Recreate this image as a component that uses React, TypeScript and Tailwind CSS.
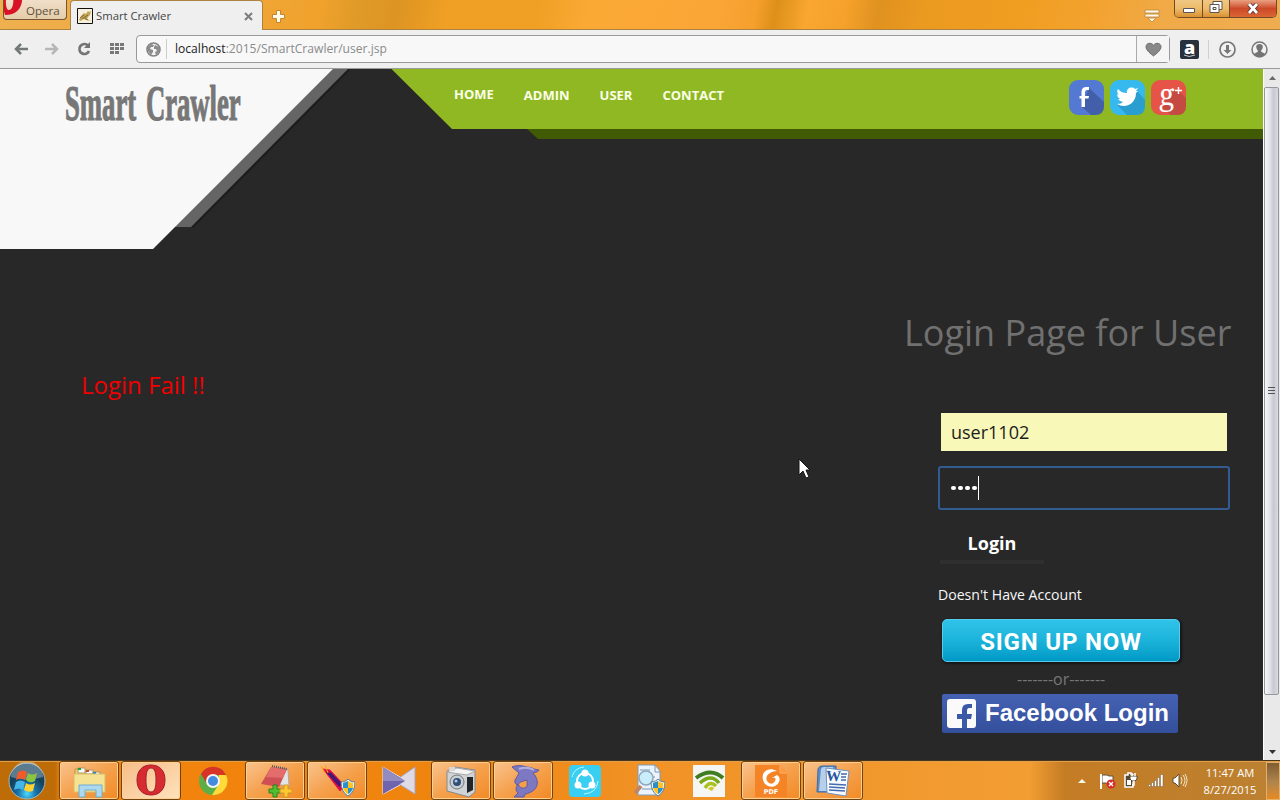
import type { ReactNode } from "react";

const ui = "font-['Open_Sans','Noto_Sans',sans-serif]";

function TitleBar() {
  return (
    <div className="relative flex h-[30px] shrink-0 items-start border-b border-[#ad8340] bg-[linear-gradient(100deg,#efb04f_0%,#efa535_20%,#f0a22c_25%,#e09a28_28%,#dd9422_31%,#f0a024_35%,#f0a024_42%,#fba935_46%,#faa637_56%,#f59f2c_59%,#dd9019_60.5%,#f9a731_63%,#f5a12b_66%,#df921f_68.5%,#eb9a20_72%,#f09e22_80%,#f3a22e_85%,#f0aa48_91%,#efac50_100%)] pl-[3px]">
      <div className="relative flex h-5 w-16 items-center overflow-hidden rounded-b-[4px] border border-t-0 border-[#765533] bg-linear-to-b from-[#f1dfca] to-[#e5cca9] pl-[22px] pt-[2px] text-[11.600px] leading-[17px] text-[#5c5140]">
        <svg className="absolute -left-1 -top-[6px]" width="24" height="22" viewBox="0 0 24 22">
          <path fillRule="evenodd" d="M10 -4C19-4 23 1 22 7C21 15 16 21 5 21L-2-4ZM9-1C5 1 5 14 8 16C13 17 14 8 13 2Z" fill="#d81325" />
        </svg>
        Opera
      </div>
      <div className="relative ml-[3px] flex h-[30px] w-[193px] items-center rounded-t-[4px] border border-b-0 border-[#ad8340] bg-[#efefef] pl-[6px] pt-px text-[11.300px] text-[#444]">
        <svg className="mr-[3px] shrink-0" width="16" height="16" viewBox="0 0 16 16">
          <path d="M.5.5h15v15H.5z" fill="#f6f1df" stroke="#111" />
          <path d="M2 12l2-4 3-3 2 1 2-3 1 1 2-1-1 4-2 2-1 2 4 2-5-1-3-1-2 2z" fill="#c3a252" />
          <path d="M3 10l4-3m-2 4 6-4m-3 3 3 2" stroke="#6e5c37" strokeWidth=".8" fill="none" />
        </svg>
        <span className="whitespace-nowrap">Smart Crawler</span>
        <svg className="ml-auto mr-[9px]" width="9" height="9" viewBox="0 0 9 9"><path d="M1 1l7 7M8 1L1 8" stroke="#7c7c7c" strokeWidth="2" /></svg>
      </div>
      <svg className="ml-[9px] mt-[10px]" width="13" height="13" viewBox="0 0 13 13"><path d="M4.5.5h4v4h4v4h-4v4h-4v-4h-4v-4h4z" fill="#fff9e9" stroke="#c4852e" /></svg>
      <svg className="ml-auto mr-[14px] mt-[9px]" width="16" height="15" viewBox="0 0 16 15"><path d="M1 1h14v3H1zm0 4h14v3H1zm3 4h8l-4 4z" fill="#fff9e6" stroke="#bd873e" strokeWidth=".8" /></svg>
      <div className="mr-[3px] flex h-[18px] w-[103px] overflow-hidden rounded-b-[5px] border border-t-0 border-[#744b26]">
        <div className="flex w-7 items-center justify-center border-r border-[#744b26] bg-linear-to-b from-[#f0c783] via-[#edbb69] to-[#d9922e] pt-[3px]">
          <svg width="14" height="7"><path d="M1.500 1.500h11v4h-11z" fill="#fff" stroke="#5e5451" /></svg>
        </div>
        <div className="flex w-[27px] items-center justify-center border-r border-[#744b26] bg-linear-to-b from-[#f0c783] via-[#edbb69] to-[#d9922e] pb-[2px]">
          <svg width="14" height="13" viewBox="0 0 14 13"><path d="M4 .5h9v8H4z" fill="#fff" stroke="#5e5451" /><path fillRule="evenodd" d="M1 3.500h9v8H1zM4 6.500h3v2H4z" fill="#fff" stroke="#5e5451" /></svg>
        </div>
        <div className="flex flex-1 items-center justify-center bg-linear-to-b from-[#e8a080] via-[#cc4928] to-[#db6533] pb-px">
          <svg width="14" height="11" viewBox="0 0 14 11"><path d="M3 1l8 9M11 1L3 10" stroke="#553331" strokeWidth="4.500" /><path d="M3 1l8 9M11 1L3 10" stroke="#fff" strokeWidth="2.800" /></svg>
        </div>
      </div>
    </div>
  );
}

function Toolbar() {
  return (
    <div className="flex h-[39px] shrink-0 items-center border-b border-[#9a9a9a] bg-[#efefef] pl-[14px] text-[#757575]">
      <svg width="14" height="12" viewBox="0 0 14 12"><path d="M14 6H3M7 1L2 6l5 5" fill="none" stroke="#737879" strokeWidth="2.500" /></svg>
      <svg className="ml-[17px]" width="14" height="12" viewBox="0 0 14 12"><path d="M0 6h11M7 1l5 5-5 5" fill="none" stroke="#b6b6b6" strokeWidth="2.500" /></svg>
      <svg className="ml-[18px]" width="14" height="14" viewBox="0 0 14 14"><path d="M11 3.500A5 5 0 1 0 12 9" fill="none" stroke="#747474" strokeWidth="2.700" /><path d="M13 0v6H7z" fill="#747474" /></svg>
      <svg className="ml-[19px]" width="15" height="12" viewBox="0 0 15 12" fill="#787878"><path d="M0 0h4v3H0zm5 0h4v3H5zm5 0h4v3h-4zM0 4h4v3H0zm5 0h4v3H5zm5 0h4v3h-4zM0 8h4v3H0zm5 0h4v3H5z" /></svg>
      <div className="ml-[11px] flex h-7 w-[1034px] items-center rounded-[4px] border border-[#999] bg-[#f8f8f8] pl-[9px]">
        <svg width="15" height="15" viewBox="0 0 15 15"><circle cx="7.500" cy="7.500" r="6.500" fill="#f3f3f3" stroke="#828282" strokeWidth="1.600" /><path d="M2 5l3-3 3 1-1 2H5L4 7l3 1v2l-2 3-3-4zM9 3l4 2v5l-3 3-1-3 2-1-1-2-2 0V5z" fill="#8c8c8c" /></svg>
        <span className="ml-[5px] h-5 w-px bg-[#cdcdcd]" />
        <span className="ml-[8px] whitespace-nowrap text-[12.100px] text-[#8b8b8b]"><span className="text-[#222]">localhost</span>:2015/SmartCrawler/user.jsp</span>
        <span className="ml-auto flex h-[26px] w-[33px] items-center justify-center border-l border-[#aaa] bg-[#f5f5f5]">
          <svg width="17" height="15" viewBox="0 0 17 15"><path d="M8.500 14C6 12 1 8.500 1 4.800C1 1 6 0 8.500 3.200C11 0 16 1 16 4.800C16 8.500 11 12 8.500 14Z" fill="#888" stroke="#6f6f6f" /></svg>
        </span>
      </div>
      <div className="ml-[10px] flex h-[19px] w-[19px] flex-col items-center rounded-[2px] bg-[#26313d] text-[18px] font-extrabold leading-[14px] text-white">
        a
        <svg className="shrink-0" width="13" height="4"><path d="M1 1Q6 4 12 1" stroke="#ccc" fill="none" /></svg>
      </div>
      <span className="ml-[9px] h-[19px] w-px bg-[#cfcfcf]" />
      <svg className="ml-[10px]" width="17" height="17" viewBox="0 0 17 17"><circle cx="8.500" cy="8.500" r="7.500" fill="#f2f2f2" stroke="#777" strokeWidth="1.700" /><path d="M7 4h3v5h2.500l-4 4-4-4H7z" fill="#777" /></svg>
      <svg className="ml-[15px]" width="17" height="17" viewBox="0 0 17 17"><circle cx="8.500" cy="8.500" r="7.500" fill="#f2f2f2" stroke="#777" strokeWidth="1.500" /><path d="M3 14c0-3 4-2 4-4C4 6 5 3 8.500 3s4.500 3 1.500 7c0 2 4 1 4 4Q8 18 3 14Z" fill="#747474" /></svg>
    </div>
  );
}

function SocialIcons() {
  return (
    <div className="flex gap-[6px]">
      <svg width="35" height="35" viewBox="0 0 35 35"><rect width="35" height="35" rx="9" fill="#5379d2" /><path d="M20 8L35 22v4q0 9-9 9h-4L13 27z" fill="#435fa9" /><path d="M20 7v3h-2q-2 0-2 3v3h4l-.5 2.500H16V27h-3.500v-8.500h-2V16h2v-4q0-5 5-5z" fill="#fff" /></svg>
      <svg width="35" height="35" viewBox="0 0 35 35"><rect width="35" height="35" rx="9" fill="#36b9ef" /><path d="M27 11l8 9v6q0 9-9 9h-9L7 25z" fill="#2a9ed0" /><path d="M8 9c3 3 5 4 9 4c-1-5 5-7 8-4l3-1-2 3h2l-2 2c0 9-7 13-12 13q-4 0-7-2 4 0 6-2-4-1-5-3h2q-3-2-3-5l2 1Q6 12 8 9Z" fill="#fff" /></svg>
      <div className="relative flex h-[35px] w-[35px] rounded-[9px] bg-[#e65448]">
        <svg className="absolute inset-0" width="35" height="35"><path d="M20 11L27 10L35 18V26Q35 35 26 35H20L11 27Z" fill="#c44a42" /></svg>
        <span className="relative ml-[8px] w-[15px] font-['Noto_Serif','Liberation_Serif',serif] text-[29px] leading-[28px] text-white">g</span>
        <svg className="relative mt-[6px]" width="9" height="9"><path d="M4.500 1v7M1 4.500h7" stroke="#fff" strokeWidth="1.500" /></svg>
      </div>
    </div>
  );
}

function SiteHeader() {
  return (
    <header className="relative flex h-[180px] shrink-0">
      <svg className="absolute inset-0" width="1263" height="180">
        <path d="M349 0L192 158" fill="none" stroke="#1d1d1d" strokeWidth="3" />
        <path d="M333 0h15L191 158h-17z" fill="#656565" />
        <path d="M0 0h333L153 180H0z" fill="#f8f8f8" />
        <path d="M391.500 0H1263v60H452z" fill="#90b822" />
        <path d="M527 60h736v10H538z" fill="#405b04" />
      </svg>
      <div className="relative w-[454px] pl-[65px] pt-[7px]">
        <span className="inline-block origin-left scale-x-[0.523] whitespace-nowrap font-['Liberation_Serif',serif] text-[51px] font-bold leading-[54px] text-[#777] [-webkit-text-stroke:1.200px_#777] [word-spacing:6px]">Smart Crawler</span>
      </div>
      <nav className="relative flex gap-[30px] pt-[17px] text-[13px] font-bold leading-[18px] text-[#fbffe9]">
        <a className="-mt-px">HOME</a>
        <a>ADMIN</a>
        <a>USER</a>
        <a>CONTACT</a>
      </nav>
      <div className="relative ml-auto pr-[77px] pt-[11px]"><SocialIcons /></div>
    </header>
  );
}

function LoginForm() {
  return (
    <div className="flex w-[359px] flex-col items-start">
      <h1 className="mt-[59px] whitespace-nowrap text-[36px] leading-[50px] text-[#707070]">Login Page for User</h1>
      <div className="ml-[37px] mt-[55px] flex h-[38px] w-[286px] items-center bg-[#f8f8b9] pl-[10px] text-[18px] text-[#1c1c1c]">user1102</div>
      <div className="ml-[34px] mt-[15px] flex h-11 w-[292px] items-center rounded-[3px] border-2 border-[#315c91] pl-[11px]">
        <span className="flex gap-[2.500px]">
          {[0, 1, 2, 3].map((i) => <span key={i} className="size-[4.500px] rounded-full bg-white" />)}
        </span>
        <span className="ml-px h-6 w-px bg-white" />
      </div>
      <div className="ml-9 mt-[22px] flex h-8 w-[104px] justify-center border-b-4 border-[#2f2f2f] text-[18px] font-bold leading-[23px] text-white">Login</div>
      <div className="ml-[34px] mt-[20px] whitespace-nowrap text-[14.100px] leading-[22px] text-[#f7f7f7]">Doesn't Have Account</div>
      <div className="ml-[38px] mt-[13px] flex h-[43px] w-[238px] items-center justify-center rounded-[5px] border border-[#55cced] bg-linear-to-b from-[#30c3e9] via-[#1bb3da] to-[#0099c6] pt-[2px] shadow-[1px_1px_2px_1px_#171717]">
        <span className="whitespace-nowrap font-[Roboto,sans-serif] text-[24px] font-bold tracking-[.8px] text-white">SIGN UP NOW</span>
      </div>
      <div className="ml-[113px] mt-[7px] whitespace-nowrap text-[16px] leading-[20px] text-[#777]">-------or-------</div>
      <div className="ml-[38px] mt-[5px] flex h-[39px] w-[236px] items-center rounded-[2px] bg-linear-to-b from-[#4561b3] to-[#344f9b] pl-[5px]">
        <svg width="29" height="29" viewBox="0 0 29 29"><rect width="29" height="29" rx="3" fill="#fafafa" /><path d="M25 5v4h-3q-2 0-2 3v3h5l-1 5h-4v9h-5v-9h-5v-5h5v-4q0-6 6-6z" fill="#3c59a7" /></svg>
        <span className="-mt-[2px] ml-[9px] whitespace-nowrap font-['Liberation_Sans',sans-serif] text-[24px] font-bold text-white">Facebook Login</span>
      </div>
    </div>
  );
}

function ScrollBar() {
  return (
    <div className="flex w-[17px] shrink-0 flex-col items-start border-l border-white bg-[#e9e9e9]">
      <svg width="15" height="18"><path d="M5 11l3.500-4L12 11z" fill="#6b6b6b" /></svg>
      <div className="flex h-[608px] w-[15px] items-center justify-center rounded-[2px] border border-[#96969d] bg-[linear-gradient(90deg,#f7f7fa,#e0e0e7_40%,#c9c9d2_65%,#d9d9e2)]">
        <svg width="7" height="8"><path d="M0 .5h7M0 3.500h7M0 6.500h7" stroke="#555" /></svg>
      </div>
      <svg className="mt-auto" width="15" height="17"><path d="M5 7h7l-3.500 4z" fill="#333" /></svg>
    </div>
  );
}

function Shield() {
  return <g><path d="M22 19c4 0 6-2 7-3c1 1 3 3 7 3q0 10-7 14q-7-4-7-14" fill="#edf5f8" stroke="#5c7d91" /><path d="M24 20q3-1 5-2v7h-5m5 0h5q-1 4-5 6" fill="#2c8fca" /><path d="M29 18q3 2 5 2v5h-5m-5 0h5v6q-4-2-5-6" fill="#ffc323" /></g>;
}

const icons: { active?: boolean; light?: boolean; art: ReactNode }[] = [
  { active: true, art: <><path d="M4 6h7l2 3h16v18H4z" fill="#ead16b" stroke="#b69a46" /><path d="M7 5h7v5H7zm8 2h7v4h-7zm7 2h7v4h-7z" fill="#f7fbff" stroke="#aa9865" /><path d="M7 5h3v2H7z" fill="#21a32b" /><path d="M15 7h3v2h-3z" fill="#ce4c32" /><path d="M22 9h3v2h-3z" fill="#2588c9" /><path d="M3 11h31v18H3z" fill="#f5e293" stroke="#d9bd68" /><path d="M8 34V22h23v12h-6v-7H14v7z" fill="#acd9f0" stroke="#6faed0" /></> },
  { active: true, light: true, art: <path fillRule="evenodd" d="M18 2C27 2 32 8 32 17S27 32 18 32S4 26 4 17S9 2 18 2ZM18 5C14 5 13 10 13 17S14 29 18 29S23 24 23 17S22 5 18 5Z" fill="#d62b30" stroke="#a51f2a" /> },
  { art: <><circle cx="18" cy="18" r="14" fill="#5daf45" /><path d="M6 11A14 14 0 0 1 31 12H18L12 21Z" fill="#d83327" /><path d="M31 12A14 14 0 0 1 17 32L24 21V12Z" fill="#ffda38" /><circle cx="18" cy="18" r="7" fill="#f5f5f5" /><circle cx="18" cy="18" r="5" fill="#428be0" /></> },
  { active: true, art: <><path d="M20 4l11 3 1 16-15-2z" fill="#e2e5e8" stroke="#b8a4a2" /><path d="M14 4l16 2-8 18-18-3z" fill="#ce5054" /><path d="M14 4l16 2-4 9-17-1z" fill="#e36d6a" /><path d="M15 3l15 3" stroke="#555" strokeWidth="2" strokeDasharray="1 1" /><path d="M16 22h4v4h4v4h-4v4h-4v-4h-4v-4h4z" fill="#50be30" stroke="#28811e" /><path d="M27 22h4v4h4v4h-4v4h-4v-4h-4v-4h4z" fill="#ffc832" stroke="#d39822" /></> },
  { active: true, art: <><path d="M4 6l7 1 15 16-5 5z" fill="#d70b49" stroke="#ed1747" /><path d="M8 9l13 14M11 10l12 12" stroke="#461775" strokeWidth="2" /><path d="M2 3l4 7M6 2l3 8" stroke="#f7a800" /><Shield /></> },
  { art: <><path d="M2 4l17 10v8L2 31z" fill="#665da9" stroke="#eee6f0" /><path d="M34 4L18 15v6l16 10z" fill="#dedbe7" stroke="#aaa1bc" /><path d="M2 4l22 14L2 31z" fill="#6f64ad" /><path d="M2 4l22 14H2z" fill="#938cc0" /></> },
  { active: true, art: <><path d="M4 8l8-4 20 3v22l-6 5-22-6z" fill="#d0d3d5" stroke="#85888a" /><path d="M4 9l10-4 18 3-8 4z" fill="#f4f4f4" stroke="#a9a9a9" /><path d="M6 4h6v4H6z" fill="#d7d7d7" /><path d="M24 14h6v13l-6 3z" fill="#202629" /><circle cx="14" cy="19" r="7" fill="#c7d0d7" stroke="#777" /><circle cx="14" cy="19" r="4" fill="#344d73" /><circle cx="13" cy="18" r="1.500" fill="#a7c8e8" /></> },
  { active: true, art: <><path d="M7 4Q13 1 22 4Q26 4 29 6L34 7Q34 9 28 10C35 17 33 26 26 29Q22 31 20 31L19 34H9L13 30Q9 26 13 21Q15 26 20 25Q23 24 22 17Q15 18 12 22Q9 20 10 17Q12 14 14 10Z" fill="#7e77c2" stroke="#605ca2" /><path d="M14 6Q22 3 29 7" fill="none" stroke="#b3b0dc" strokeWidth="2" /></> },
  { art: <><rect x="2" y="2" width="32" height="32" rx="4" fill="#38cff2" /><circle cx="18" cy="18" r="8" fill="none" stroke="#fff" strokeWidth="2" /><g fill="#fff"><circle cx="18" cy="10" r="3.500" /><circle cx="11" cy="22" r="3.500" /><circle cx="25" cy="22" r="3.500" /></g><path d="M5 14Q7 5 17 4m14 14q-1 12-14 13" fill="none" stroke="#b8f4ff" /></> },
  { art: <><path d="M9 2h17l5 6v24H9z" fill="#edf3fb" stroke="#7e9cbd" /><path d="M26 2v7h5M11 7h10M13 14h13M13 26h11" fill="none" stroke="#7897b9" /><path d="M12 23l-6 7" stroke="#c08662" strokeWidth="4" /><circle cx="17" cy="15" r="7" fill="#c9edfa" stroke="#8da7bb" strokeWidth="1.500" /><Shield /></> },
  { art: <><path d="M2 2h32v32H2z" fill="#f5f5f4" /><path d="M5 15Q20 4 32 15" fill="none" stroke="#407c22" strokeWidth="4" /><path d="M9 20Q20 10 28 20" fill="none" stroke="#78a91b" strokeWidth="3.500" /><path d="M14 25Q19 17 25 23" fill="none" stroke="#a9c21d" strokeWidth="3.500" /><path d="M17 26q3-4 6-1l-2 3z" fill="#d0c820" /></> },
  { active: true, art: <><path d="M2 2h25l7 8v24H2z" fill="#f58427" /><path d="M27 2v8h7" fill="#ff9a42" stroke="#ffad69" /><path d="M24 8C14 3 8 10 10 17C12 25 23 26 26 19Q28 14 24 12L19 15q5-1 3 3-2 4-6 2C10 16 15 8 24 8Z" fill="#fff" /></> },
  { active: true, art: <><path d="M3 6q1-3 4-3h14v26H2z" fill="#5f8bc5" stroke="#3f6aa4" /><path d="M6 6q1-2 3-2h9v24H4z" fill="#b6d0e9" /><path d="M11 5l23 3-3 25-19-3z" fill="#f7fbff" stroke="#7192bd" /><path d="M26 11h6m-6 3h5m-5 3h5M14 21l17 1m-17 2l16 1m-16 2l16 1" stroke="#436bae" strokeWidth="1.700" /></> },
];

function Taskbar() {
  return (
    <div className="flex h-10 shrink-0 border-t border-[#49341d] bg-[linear-gradient(90deg,#bd6c08_0,#bd6c08_55px,#f4820c_61px,#ee850f_450px,#f19226_650px,#f29d32_1030px,#c47c24_1065px,#bb8132_1280px)] shadow-[inset_0_1px_0_#dfa04c]">
      <div className="flex w-[59px] items-center justify-center pr-[5px]">
        <svg width="38" height="38" viewBox="0 0 38 38">
          <defs><radialGradient id="orb" cx="50%" cy="85%"><stop stopColor="#4edaff" /><stop offset=".5" stopColor="#1672aa" /><stop offset="1" stopColor="#17425e" /></radialGradient></defs>
          <circle cx="19" cy="19" r="18" fill="url(#orb)" stroke="#9fbac1" /><path d="M3 15a16 16 0 0 1 32 0Q18 20 3 15" fill="#fff" opacity=".3" />
          <path d="M10 10q5-3 9 0l-2 8q-4-3-9 0z" fill="#f15a29" /><path d="M20 11q4 3 9 0l-2 8q-5 3-9-1z" fill="#8bc53f" /><path d="M8 20q4-3 9 0l-2 8q-4-3-9 0z" fill="#45b6e8" /><path d="M18 21q4 3 9 0l-2 8q-5 2-9-1z" fill="#ffd231" />
        </svg>
      </div>
      <div className="flex gap-[2px]">
        {icons.map(({ active, light, art }, i) => (
          <div key={i} className={`relative flex h-[39px] w-[60px] items-center justify-center ${active ? "rounded-[3px] border border-[#71430f] shadow-[inset_0_0_0_1px_#ffd092]" : ""} ${light ? "bg-linear-to-br from-[#f5bd88] to-[#ffe2bc]" : active ? "bg-linear-to-br from-[#f9c38c] via-[#f5a14d] to-[#f28a20]" : ""}`}>
            <svg width="36" height="36" viewBox="0 0 36 36">{art}</svg>
            {i === 11 && <span className="absolute bottom-[3px] font-['DejaVu_Sans',sans-serif] text-[6.500px] font-bold leading-[8px] text-white">PDF</span>}
            {i === 12 && <span className="absolute left-[22px] top-[5px] rotate-3 font-['Liberation_Serif',serif] text-[15px] font-bold leading-[18px] text-[#2556a0]">W</span>}
          </div>
        ))}
      </div>
      <div className="ml-auto flex items-center text-white">
        <svg width="8" height="5"><path d="M0 5l4-4 4 4z" fill="#f5f5e8" /></svg>
        <svg className="ml-[13px]" width="18" height="18" viewBox="0 0 18 18"><path d="M2 2v14M3 3h5l2 1h4v8H9l-2-1H3z" fill="#fff" stroke="#625239" /><path d="M2 2v15" stroke="#fff" strokeWidth="2" /><circle cx="12" cy="12" r="4.500" fill="#d62b2b" /><path d="M10 10l4 4m0-4l-4 4" stroke="#fff" strokeWidth="1.400" /></svg>
        <svg className="ml-[6px]" width="16" height="17" viewBox="0 0 16 17"><path d="M5 3V1h3v2h2v12H2V3z" fill="#564832" stroke="#fff" strokeWidth="1.500" /><path d="M4 8h4v5H4z" fill="#fff" /><path d="M7 4h7v3l-2 2H9L7 7z" fill="#fff" stroke="#564832" /><path d="M9 1v3m3-3v3M11 9v4H9" fill="none" stroke="#fff" strokeWidth="1.500" /></svg>
        <svg className="ml-[9px]" width="16" height="14" viewBox="0 0 16 14"><path d="M.5 10.500h2v2h-2zM3.500 8.500h2v4h-2zM6.500 6.500h2v6h-2zM9.500 3.500h2v9h-2zM12.500.500h2.500v12h-2.500z" fill="#fff" stroke="#584a33" strokeWidth=".4" /></svg>
        <svg className="ml-[8px]" width="16" height="15" viewBox="0 0 16 15"><path d="M1 5h2l4-4v13l-4-4H1z" fill="#fff" stroke="#5e5038" /><path d="M9 4q2 3 0 7m2-9q4 5 0 11m2-12q4 6 0 13" fill="none" stroke="#eee6ca" /></svg>
        <div className="ml-[12px] flex w-[60px] flex-col items-center whitespace-nowrap text-[11.200px] leading-[17px]"><span>11:47 AM</span><span>8/27/2015</span></div>
        <div className="ml-[6px] h-[38px] w-[14px] border border-[#e4b16c] bg-linear-to-b from-[#805c30] via-[#ac834d] to-[#e78b1e]" />
      </div>
    </div>
  );
}

export default function App() {
  return (
    <div className={`relative flex h-[800px] w-[1280px] flex-col overflow-hidden ${ui}`}>
      <TitleBar />
      <Toolbar />
      <div className="flex h-[691px] shrink-0 bg-[#282828]">
        <main className="flex w-[1263px] flex-col">
          <SiteHeader />
          <section className="flex justify-between">
            <p className="ml-[81px] mt-[119px] whitespace-nowrap text-[24px] leading-[34px] text-[#f00000]">Login Fail !!</p>
            <LoginForm />
          </section>
        </main>
        <ScrollBar />
      </div>
      <Taskbar />
      <svg className="absolute left-[798px] top-[458px]" width="13" height="21" viewBox="0 0 13 21"><path d="M1 1v16l4-4 3 7 3-1-3-7h4z" fill="#fff" stroke="#151515" /></svg>
    </div>
  );
}
